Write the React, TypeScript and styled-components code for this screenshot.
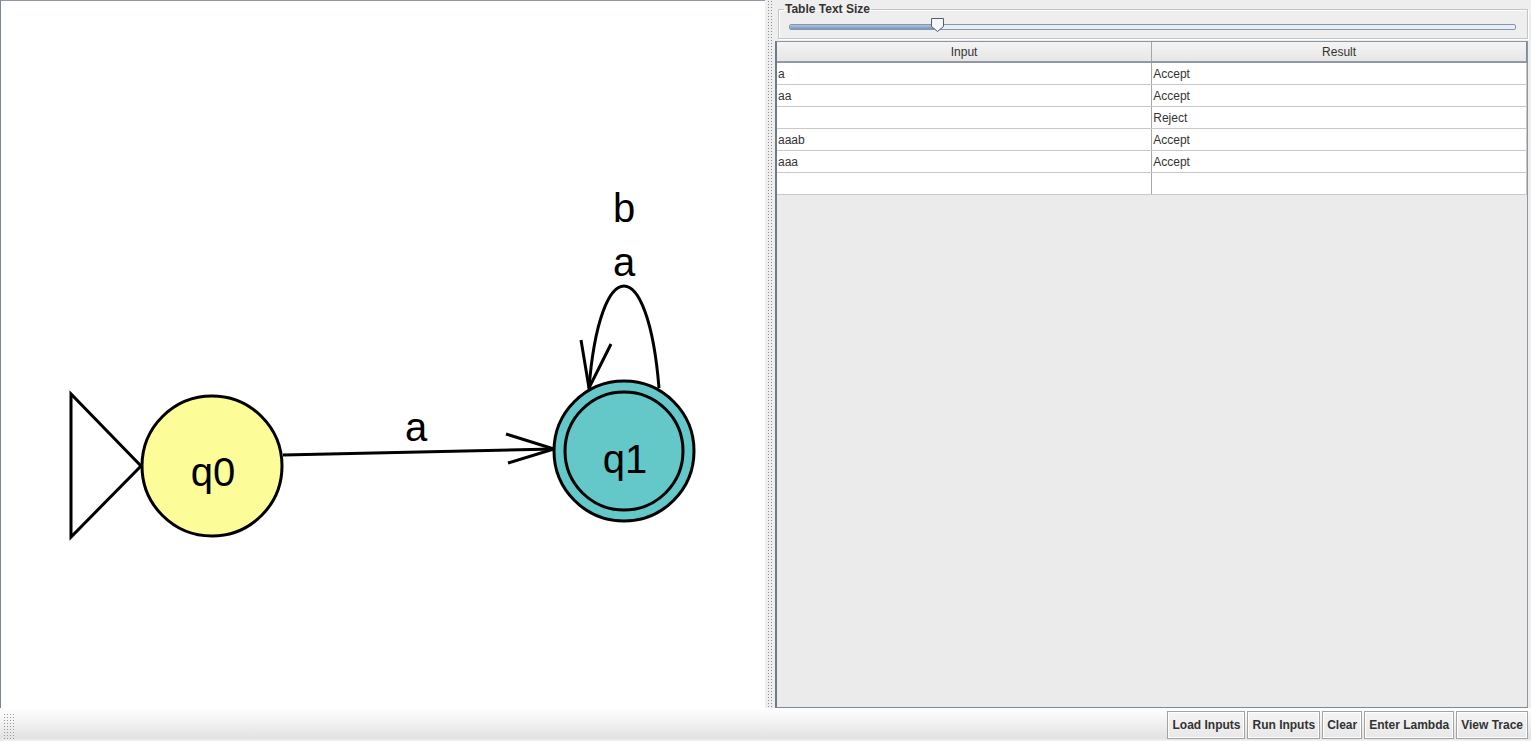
import React from 'react'
import styled, { createGlobalStyle } from 'styled-components'

const GlobalStyle = createGlobalStyle`
  html, body {
    margin: 0;
    padding: 0;
    background: #eeeeee;
    font-family: "Liberation Sans", Arial, sans-serif;
    overflow: hidden;
  }
`

const rows = [
    { input: 'a', result: 'Accept' },
    { input: 'aa', result: 'Accept' },
    { input: '', result: 'Reject' },
    { input: 'aaab', result: 'Accept' },
    { input: 'aaa', result: 'Accept' },
    { input: '', result: '' },
]

const buttons = ['Load Inputs', 'Run Inputs', 'Clear', 'Enter Lambda', 'View Trace']

const Window = styled.div`
  display: flex;
  flex-direction: column;
  width: 1531px;
  height: 741px;
`

const Main = styled.div`
  display: flex;
  flex: 1;
  min-height: 0;
`

const Canvas = styled.div`
  width: 765px;
  background: #ffffff;
  border-top: 1px solid #8e99a3;
  border-left: 1px solid #7a8794;
  box-sizing: border-box;
  svg {
    display: block;
  }
`

const Divider = styled.div`
  width: 9px;
  display: flex;
  justify-content: center;
  background: #eeeeee;
  &::after {
    content: '';
    width: 5px;
    background-image: radial-gradient(#8e8e8e 0.7px, transparent 0.9px);
    background-size: 3px 3px;
  }
`

const RightPanel = styled.div`
  flex: 1;
  display: flex;
  flex-direction: column;
  padding: 3px 3px 0 1px;
  background: #eeeeee;
  min-width: 0;
`

const GroupBox = styled.fieldset`
  margin: 0 0 2px 3px;
  padding: 0 10px 5px 10px;
  border: 1px solid #c4c4c4;
  box-shadow: inset 1px 1px 0 #ffffff, 1px 1px 0 #ffffff;
  height: 36px;
  box-sizing: border-box;
  legend {
    font-size: 12px;
    font-weight: bold;
    color: #333333;
    padding: 0 1px;
    margin-left: -5px;
    line-height: 13px;
  }
`

const Slider = styled.div`
  position: relative;
  height: 14px;
  margin-top: 2px;
`

const Track = styled.div`
  position: absolute;
  left: 0;
  right: 1px;
  top: 6px;
  height: 4px;
  border: 1px solid #8396ad;
  border-radius: 2px;
  background: #e8edf3;
  overflow: hidden;
`

const TrackFill = styled.div`
  height: 100%;
  background: linear-gradient(#b3c6dc, #7795ba);
`

const Thumb = styled.svg`
  position: absolute;
  top: -1px;
  margin-left: -7px;
`

const ScrollPane = styled.div`
  flex: 1;
  background: #ebebeb;
  border: 1px solid #8a96a2;
  border-left: 2px solid #6e7a86;
  border-bottom: 1px solid #7d8995;
  min-height: 0;
`

const Table = styled.table`
  width: 100%;
  border-collapse: collapse;
  table-layout: fixed;
  font-size: 12px;
  color: #333333;
`

const HeadCell = styled.th`
  font-weight: normal;
  height: 19px;
  padding: 0;
  background: linear-gradient(#f4f4f4, #e6e6e6);
  border-right: 1px solid #a6a6a6;
  border-bottom: 2px solid #8f9aa4;
  &:last-child {
    border-right: 1px solid #7a8794;
  }
`

const Cell = styled.td`
  height: 21px;
  padding: 0 0 0 1px;
  background: #ffffff;
  border-right: 1px solid #c8c8c8;
  border-bottom: 1px solid #c8c8c8;
  white-space: nowrap;
  &:first-child {
    border-right: 1px solid #a8a8a8;
  }
`

const BottomBar = styled.div`
  height: 33px;
  display: flex;
  align-items: center;
  justify-content: space-between;
  padding: 0 3px 0 3px;
  background: linear-gradient(#ffffff 0%, #f6f6f6 30%, #e2e2e2 92%, #f4f4f4 100%);
  box-sizing: border-box;
`

const Grip = styled.div`
  width: 12px;
  height: 27px;
  margin-top: 4px;
  background-image: radial-gradient(#9a9a9a 0.7px, transparent 0.9px);
  background-size: 3px 3px;
`

const ButtonRow = styled.div`
  display: flex;
  gap: 2px;
`

const Button = styled.button`
  height: 28px;
  padding: 0 4px;
  font-family: "Liberation Sans", Arial, sans-serif;
  font-size: 12px;
  font-weight: bold;
  color: #333333;
  background: linear-gradient(#f4f4f4, #e8e8e8);
  border: 1px solid #a3a3a3;
  box-shadow: inset 1px 1px 0 #ffffff, inset -1px -1px 0 #ffffff;
  border-radius: 0;
`

const Label = styled.text`
  font-family: "Liberation Sans", Arial, sans-serif;
  font-size: 40px;
  fill: #000000;
`

const Diagram = () => (
    <svg width="764" height="707" viewBox="1 1 764 707">
        <g fill="none" stroke="#000" strokeWidth="3">
            <polygon points="71,394 71,537 141,466" fill="#ffffff" />
            <line x1="283" y1="455" x2="554" y2="449" />
            <polyline points="506,434 554,449 508,463" />
            <path d="M 659 388 C 648 252, 600 252, 589 388" />
            <polyline points="581,340 589,388 611,344" />
        </g>
        <circle cx="212" cy="466" r="70" fill="#fcfc98" stroke="#000" strokeWidth="3" />
        <circle cx="624" cy="451" r="70" fill="#64c8c8" stroke="#000" strokeWidth="3" />
        <circle cx="624" cy="451" r="59" fill="none" stroke="#000" strokeWidth="3" />
        <Label x="213" y="486" textAnchor="middle">q0</Label>
        <Label x="625" y="473" textAnchor="middle">q1</Label>
        <Label x="416" y="441" textAnchor="middle">a</Label>
        <Label x="624" y="276" textAnchor="middle">a</Label>
        <Label x="624" y="222" textAnchor="middle">b</Label>
    </svg>
)

const TextSizeSlider: React.FC<{ value: number }> = ({ value }) => (
    <Slider>
        <Track>
            <TrackFill style={{ width: `${value}%` }} />
        </Track>
        <Thumb width="15" height="16" viewBox="0 0 15 16" style={{ left: `${value}%` }}>
            <path d="M1.5 1.5 H13.5 V9.5 L7.5 14.5 L1.5 9.5 Z" fill="#f4f6f8" stroke="#4c5f75" strokeWidth="1" />
        </Thumb>
    </Slider>
)

const App: React.FC = () => {
    return (
        <Window>
            <GlobalStyle />
            <Main>
                <Canvas>
                    <Diagram />
                </Canvas>
                <Divider />
                <RightPanel>
                    <GroupBox>
                        <legend>Table Text Size</legend>
                        <TextSizeSlider value={20.3} />
                    </GroupBox>
                    <ScrollPane>
                        <Table>
                            <thead>
                                <tr>
                                    <HeadCell>Input</HeadCell>
                                    <HeadCell>Result</HeadCell>
                                </tr>
                            </thead>
                            <tbody>
                                {rows.map((row, index) => (
                                    <tr key={index}>
                                        <Cell>{row.input}</Cell>
                                        <Cell>{row.result}</Cell>
                                    </tr>
                                ))}
                            </tbody>
                        </Table>
                    </ScrollPane>
                </RightPanel>
            </Main>
            <BottomBar>
                <Grip />
                <ButtonRow>
                    {buttons.map((label) => (
                        <Button key={label}>{label}</Button>
                    ))}
                </ButtonRow>
            </BottomBar>
        </Window>
    )
}

export default App
